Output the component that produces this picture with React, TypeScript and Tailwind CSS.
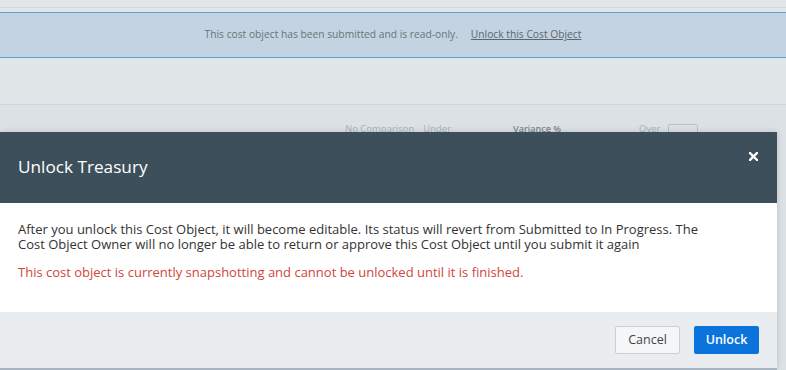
import React from "react";

export default function App() {
  return (
    <div className="relative w-[786px] h-[370px] overflow-hidden bg-[#dce1e6] font-['Open_Sans','Liberation_Sans',Arial,sans-serif]">
      {/* page behind */}
      <div className="h-[7px] bg-[#e1e6e9]" />
      <div className="h-px bg-[#d2d8db]" />
      <div className="h-[4px] bg-[#e1e6e9]" />
      <div className="h-[46px] border-y border-[#5fa0e2] bg-[#c3d3e1] flex items-center justify-center gap-[13px] text-[10.25px] text-[#6b747c]">
        <span>This cost object has been submitted and is read-only.</span>
        <span className="underline text-[#5c6670]">Unlock this Cost Object</span>
      </div>
      <div className="h-[46px] bg-[#e1e6e9]" />
      <div className="h-px bg-[#cfd5d8]" />
      <div className="flex items-start pt-[17px] text-[9.5px] text-[#a9b2ba]">
        <span className="ml-[345px]">No Comparison</span>
        <span className="ml-[9px]">Under</span>
        <span className="ml-[62px] text-[9px] font-semibold text-[#7c858c]">Variance %</span>
        <span className="ml-[78px]">Over</span>
        <span className="ml-[8px] mt-[2px] w-[30px] h-[10px] border border-[#b9c1c8] rounded-[2px]" />
      </div>

      {/* modal */}
      <div className="absolute left-0 top-[132px] w-[777px] shadow-[0_0_6px_rgba(0,0,0,0.15)]">
        <div className="h-[71px] bg-[#3d4f5a] flex items-start justify-between pl-[18px] pr-[19px]">
          <span className="text-[17.2px] text-white leading-none mt-[26px]">Unlock Treasury</span>
          <svg className="mt-[20px]" width="9" height="9" viewBox="0 0 9 9">
            <path d="M1 1L8 8M8 1L1 8" stroke="white" strokeWidth="2.4" strokeLinecap="square" />
          </svg>
        </div>
        <div className="h-[109px] bg-white pl-[18px] pr-[20px] pt-[19px] text-[13px]">
          <p className="text-[#333] leading-[15px] max-w-[700px]">
            After you unlock this Cost Object, it will become editable. Its status will revert from Submitted to In Progress. The Cost Object Owner will no longer be able to return or approve this Cost Object until you submit it again
          </p>
          <p className="text-[#d0463c] mt-[13px] leading-[15px]">
            This cost object is currently snapshotting and cannot be unlocked until it is finished.
          </p>
        </div>
        <div className="h-[56px] bg-[#e9edf0] flex items-start justify-end pt-[14px] pr-[18px] gap-[14px]">
          <button className="w-[65px] h-[28px] bg-[#f5f6f7] border border-[#c9cfd5] rounded-[2px] text-[12.5px] text-[#444]">Cancel</button>
          <button className="w-[65px] h-[28px] bg-[#0a74dc] rounded-[2px] text-[12.5px] font-semibold text-white">Unlock</button>
        </div>
      </div>
      <div className="absolute left-0 top-[368px] w-[777px] h-[2px] bg-[#a7b4c2]" />
    </div>
  );
}
